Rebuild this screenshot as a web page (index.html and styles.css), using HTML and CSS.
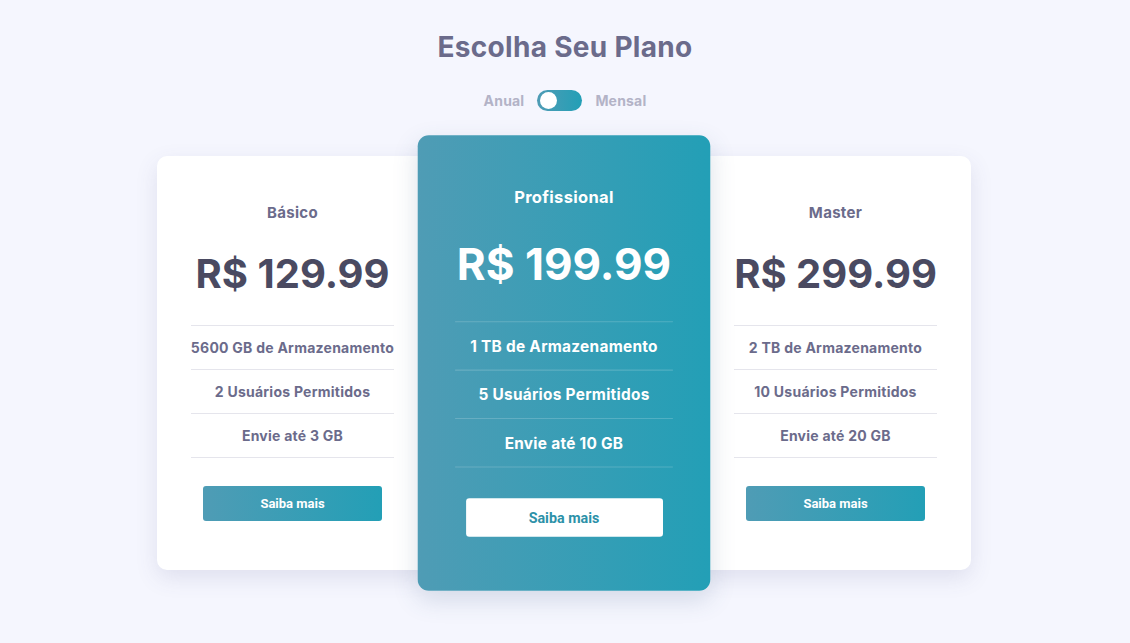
FILE: index.html
```html
<!DOCTYPE html>
<html lang="pt-BR">
<head>
<meta charset="utf-8">
<title>Escolha Seu Plano</title>
<link rel="stylesheet" href="styles.css">
</head>
<body>
<main class="pricing">
  <h1 class="title">Escolha Seu Plano</h1>
  <div class="billing">
    <span class="billing-label">Anual</span>
    <span class="switch"><span class="knob"></span></span>
    <span class="billing-label">Mensal</span>
  </div>
  <div class="cards">
    <section class="card">
      <h2 class="plan-name">Básico</h2>
      <p class="price">R$ 129.99</p>
      <ul class="features">
        <li>5600 GB de Armazenamento</li>
        <li>2 Usuários Permitidos</li>
        <li>Envie até 3 GB</li>
      </ul>
      <button class="cta">Saiba mais</button>
    </section>
    <section class="card featured">
      <h2 class="plan-name">Profissional</h2>
      <p class="price">R$ 199.99</p>
      <ul class="features">
        <li>1 TB de Armazenamento</li>
        <li>5 Usuários Permitidos</li>
        <li>Envie até 10 GB</li>
      </ul>
      <button class="cta">Saiba mais</button>
    </section>
    <section class="card">
      <h2 class="plan-name">Master</h2>
      <p class="price">R$ 299.99</p>
      <ul class="features">
        <li>2 TB de Armazenamento</li>
        <li>10 Usuários Permitidos</li>
        <li>Envie até 20 GB</li>
      </ul>
      <button class="cta">Saiba mais</button>
    </section>
  </div>
</main>
</body>
</html>
```

FILE: styles.css
```css
* { box-sizing: border-box; }

html, body {
  margin: 0;
  padding: 0;
}

body {
  background: #f5f6fe;
  font-family: "Inter", "Noto Sans", sans-serif;
  color: #6b6b8b;
  min-height: 100vh;
}

.pricing {
  display: flex;
  flex-direction: column;
  align-items: center;
  padding: 30px 0 50px;
}

.title {
  margin: 0;
  font-size: 28px;
  line-height: 34px;
  font-weight: 700;
  letter-spacing: 0.3px;
  color: #6b6b8b;
}

.billing {
  margin-top: 25px;
  display: flex;
  align-items: center;
  gap: 13px;
  height: 22px;
}

.billing-label {
  font-size: 14px;
  font-weight: 700;
  letter-spacing: 0.2px;
  color: #b3b3c7;
}

.switch {
  width: 45px;
  height: 21px;
  border-radius: 11px;
  background: linear-gradient(90deg, #4f9cb5, #239fb6);
  display: flex;
  align-items: center;
  padding: 0 3px;
}

.knob {
  width: 17px;
  height: 17px;
  border-radius: 50%;
  background: #fff;
}

.cards {
  margin-top: 45px;
  display: grid;
  grid-template-columns: 271px 266px 271px;
  column-gap: 3px;
  margin-left: -2px;
}

.card {
  background: #fff;
  border-radius: 10px;
  box-shadow: 0 8px 22px rgba(80, 80, 130, 0.13);
  padding: 47px 34px 49px;
  display: flex;
  flex-direction: column;
  align-items: center;
  text-align: center;
}

.plan-name {
  margin: 0;
  font-size: 15px;
  line-height: 20px;
  font-weight: 700;
  letter-spacing: 0.3px;
  color: #6b6b8b;
}

.price {
  margin: 24px 0 0;
  font-size: 40px;
  line-height: 54px;
  font-weight: 700;
  color: #4a4a61;
  white-space: nowrap;
}

.features {
  list-style: none;
  margin: 24px 0 0;
  padding: 0;
  width: 100%;
  border-top: 1px solid #e5e5ec;
}

.features li {
  height: 44px;
  display: flex;
  align-items: center;
  justify-content: center;
  border-bottom: 1px solid #e5e5ec;
  font-size: 14px;
  font-weight: 700;
  letter-spacing: 0.25px;
  color: #6b6b8b;
  white-space: nowrap;
}

.cta {
  margin-top: 28px;
  width: 179px;
  height: 35px;
  border: 0;
  border-radius: 3px;
  background: linear-gradient(90deg, #4f9cb5, #239fb6);
  color: #fff;
  font-family: "Roboto", "Liberation Sans", sans-serif;
  font-weight: 700;
  font-size: 13px;
  cursor: pointer;
}

.featured {
  position: relative;
  z-index: 1;
  transform: scale(1.1);
  background: linear-gradient(90deg, #4f9cb5, #239fb6);
  box-shadow: 0 8px 22px rgba(60, 90, 130, 0.18);
}

.featured .plan-name,
.featured .price,
.featured .features li {
  color: #fff;
}

.featured .features {
  border-top-color: rgba(255, 255, 255, 0.18);
}

.featured .features li {
  border-bottom-color: rgba(255, 255, 255, 0.18);
}

.featured .cta {
  background: #fff;
  color: #2c91a8;
}
```
